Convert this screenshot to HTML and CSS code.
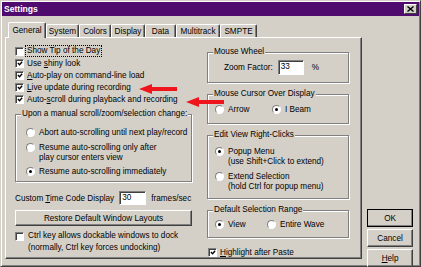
FILE: index.html
```html
<!DOCTYPE html>
<html lang="en">
<head>
  <meta charset="UTF-8">
  <title>Settings</title>
  <link rel="stylesheet" href="styles.css">
</head>
<body>

  <div class="window">
    <div class="titlebar">
      <span class="title">Settings</span>
      <span class="close-btn">
        <svg width="7" height="6" viewBox="0 0 7 6"><path d="M0.5 0.5 L6.5 5.5 M6.5 0.5 L0.5 5.5" stroke="#000" stroke-width="1.4"/></svg>
      </span>
    </div>

    <div class="main">
      <div class="sheet">
        <div class="tabs">
          <span class="tab tab-general active">General</span>
          <span class="tab tab-system">System</span>
          <span class="tab tab-colors">Colors</span>
          <span class="tab tab-display">Display</span>
          <span class="tab tab-data">Data</span>
          <span class="tab tab-multitrack">Multitrack</span>
          <span class="tab tab-smpte">SMPTE</span>
        </div>

        <div class="panel">
          <!-- left column -->
          <div class="col-left">
            <div class="check"><span class="box"></span><span class="focus">Show Tip of the Day</span></div>
            <div class="check"><span class="box"><svg viewBox="0 0 7 7"><path d="M1 3 L3 5 L6 1.5" /></svg></span><span>Use <u>s</u>hiny look</span></div>
            <div class="check"><span class="box"><svg viewBox="0 0 7 7"><path d="M1 3 L3 5 L6 1.5" /></svg></span><span><u>A</u>uto-play on command-line load</span></div>
            <div class="check"><span class="box"><svg viewBox="0 0 7 7"><path d="M1 3 L3 5 L6 1.5" /></svg></span><span><u>L</u>ive update during recording</span></div>
            <div class="check"><span class="box"><svg viewBox="0 0 7 7"><path d="M1 3 L3 5 L6 1.5" /></svg></span><span>Auto-<u>s</u>croll during playback and recording</span></div>

            <div class="group group-scroll">
              <span class="group-title">Upon a manual scroll/zoom/selection change:</span>
              <div class="radio"><span class="dot"></span><span>Abort auto-scrolling until next play/record</span></div>
              <div class="radio"><span class="dot"></span><span>Resume auto-scrolling only after<br>play cursor enters view</span></div>
              <div class="radio"><span class="dot on"></span><span>Resume auto-scrolling immediately</span></div>
            </div>

            <div class="timecode">
              <span>Custom <u>T</u>ime Code Display</span>
              <span class="field field-fps">30</span>
              <span>frames/sec</span>
            </div>

            <div class="btn btn-restore">Restore Default Window Layouts</div>

            <div class="check check-dock"><span class="box"></span><span>Ctrl key allows dockable windows to dock<br>(normally, Ctrl key forces undocking)</span></div>
          </div>

          <!-- right column -->
          <div class="col-right">
            <div class="group group-wheel">
              <span class="group-title">Mouse Wheel</span>
              <div class="zoom-row">
                <span>Zoom Factor:</span>
                <span class="field field-zoom">33</span>
                <span class="pct">%</span>
              </div>
            </div>

            <div class="group group-cursor">
              <span class="group-title">Mouse Cursor Over Display</span>
              <div class="radio-row">
                <div class="radio radio-arrow"><span class="dot"></span><span>Arrow</span></div>
                <div class="radio"><span class="dot on"></span><span>I Beam</span></div>
              </div>
            </div>

            <div class="group group-rclick">
              <span class="group-title">Edit View Right-Clicks</span>
              <div class="radio"><span class="dot on"></span><span>Popup Menu<br>(use Shift+Click to extend)</span></div>
              <div class="radio"><span class="dot"></span><span>Extend Selection<br>(hold Ctrl for popup menu)</span></div>
            </div>

            <div class="group group-range">
              <span class="group-title">Default Selection Range</span>
              <div class="radio-row">
                <div class="radio radio-view"><span class="dot on"></span><span>View</span></div>
                <div class="radio"><span class="dot"></span><span>Entire Wave</span></div>
              </div>
            </div>

            <div class="check check-paste"><span class="box"><svg viewBox="0 0 7 7"><path d="M1 3 L3 5 L6 1.5" /></svg></span><span><u>H</u>ighlight after Paste</span></div>
          </div>

          <svg class="arrow arrow-1" width="38" height="10" viewBox="0 0 38 10"><path d="M0 5 L13 0 L13 3 L38 3 L38 7 L13 7 L13 10 Z" fill="#f0141c"/></svg>
          <svg class="arrow arrow-2" width="38" height="10" viewBox="0 0 38 10"><path d="M0 5 L13 0 L13 3 L38 3 L38 7 L13 7 L13 10 Z" fill="#f0141c"/></svg>
        </div>
      </div>

      <div class="buttons">
        <div class="btn btn-side btn-default">OK</div>
        <div class="btn btn-side">Cancel</div>
        <div class="btn btn-side"><span><u>H</u>elp</span></div>
      </div>
    </div>
  </div>

</body>
</html>
```

FILE: styles.css
```css
body {
  margin: 0;
  font-family: "Liberation Sans", Arial, sans-serif;
  font-size: 8.2px;
  color: #000;
  background-color: #d4d0c8;
}

u {
  text-decoration-thickness: 1px;
  text-underline-offset: 1px;
}

.window {
  width: 421px;
  height: 267px;
  box-sizing: border-box;
  padding: 1px;
  border: 1px solid;
  border-color: #d4d0c8 #404040 #404040 #d4d0c8;
  box-shadow: inset 1px 1px #fff, inset -1px -1px #808080;
  background-color: #d4d0c8;
}

/* title bar */
.titlebar {
  height: 14px;
  display: flex;
  align-items: center;
  justify-content: space-between;
  padding: 0 2px 0 2px;
  background-color: #500b6e;
}

.title {
  color: #fff;
  font-weight: bold;
  font-size: 8.6px;
}

.close-btn {
  width: 13px;
  height: 10px;
  box-sizing: border-box;
  display: flex;
  align-items: center;
  justify-content: center;
  background-color: #d4d0c8;
  border: 1px solid;
  border-color: #fff #404040 #404040 #fff;
}

/* main area */
.main {
  display: flex;
  gap: 5px;
  height: 249px;
  padding: 6px 6px 0 3px;
}

.sheet {
  width: 358px;
  display: flex;
  flex-direction: column;
}

.tabs {
  height: 15px;
  display: flex;
  align-items: flex-end;
  padding-left: 3px;
}

.tab {
  height: 13px;
  box-sizing: border-box;
  display: flex;
  align-items: center;
  justify-content: center;
  border: 1px solid;
  border-bottom: none;
  border-color: #fff #404040 #fff #fff;
  border-radius: 2px 2px 0 0;
  box-shadow: inset -1px 0 #808080;
  background-color: #d4d0c8;
}

.tab.active {
  height: 16px;
  margin-bottom: -1px;
  position: relative;
  z-index: 1;
}

.tab-general { width: 38px; }
.tab-system { width: 33px; }
.tab-colors { width: 32px; }
.tab-display { width: 34px; }
.tab-data { width: 31px; }
.tab-multitrack { width: 44px; }
.tab-smpte { width: 37px; }

.panel {
  position: relative;
  height: 222px;
  box-sizing: border-box;
  display: flex;
  gap: 15px;
  padding: 7px 10px 0 9px;
  border: 1px solid;
  border-color: #fff #404040 #404040 #fff;
  box-shadow: inset -1px -1px #808080;
}

.col-left {
  width: 177px;
  display: flex;
  flex-direction: column;
}

.col-right {
  width: 142px;
  display: flex;
  flex-direction: column;
}

/* check boxes */
.check {
  height: 12px;
  display: flex;
  align-items: center;
  white-space: nowrap;
}

.box {
  width: 9px;
  height: 9px;
  box-sizing: border-box;
  flex-shrink: 0;
  margin-right: 3px;
  border: 1px solid;
  border-color: #808080 #fff #fff #808080;
  box-shadow: inset 1px 1px #404040;
  background-color: #fff;
  display: flex;
  align-items: center;
  justify-content: center;
}

.box svg {
  width: 7px;
  height: 7px;
  margin: 1px 0 0 1px;
}

.box path {
  fill: none;
  stroke: #000;
  stroke-width: 1.6;
}

.focus {
  outline: 1px dotted #000;
  outline-offset: 0;
  padding: 0 1px;
  margin-left: -1px;
  line-height: 10px;
}

.check-dock {
  height: auto;
  align-items: flex-start;
  line-height: 12px;
  margin-top: 4px;
}

.check-dock .box {
  margin-top: 2px;
  margin-right: 4px;
}

.check-paste {
  margin-top: 8px;
  padding-left: 1px;
}

/* group boxes */
.group {
  position: relative;
  box-sizing: border-box;
  border: 1px solid #808080;
  box-shadow: 1px 1px 0 #fff, inset 1px 1px 0 #fff;
}

.group-title {
  position: absolute;
  top: -6px;
  left: 5px;
  padding: 0 1px;
  line-height: 10px;
  background-color: #d4d0c8;
  white-space: nowrap;
}

.group-scroll {
  margin-top: 9px;
  height: 68px;
  padding: 13px 0 0 10px;
  display: flex;
  flex-direction: column;
  gap: 5px;
}

.group-scroll .radio + .radio + .radio {
  margin-top: -1px;
}

.group-wheel {
  margin-top: 7px;
  height: 31px;
  padding: 7px 0 0 16px;
}

.group-cursor {
  margin-top: 11px;
  height: 30px;
  padding: 10px 0 0 7px;
}

.group-rclick {
  margin-top: 11px;
  height: 64px;
  padding: 11px 0 0 7px;
  display: flex;
  flex-direction: column;
  gap: 5px;
}

.group-range {
  margin-top: 11px;
  height: 28px;
  padding: 9px 0 0 7px;
}

/* radio buttons */
.radio {
  display: flex;
  align-items: flex-start;
  line-height: 10px;
  white-space: nowrap;
}

.dot {
  width: 9px;
  height: 9px;
  box-sizing: border-box;
  flex-shrink: 0;
  margin: 0 4px 0 0;
  border-radius: 50%;
  border: 1px solid;
  border-color: #808080 #fff #fff #808080;
  background-color: #fff;
  display: flex;
  align-items: center;
  justify-content: center;
}

.dot.on::after {
  content: "";
  width: 3px;
  height: 3px;
  border-radius: 50%;
  background-color: #000;
}

.radio-row {
  display: flex;
}

.radio-arrow {
  width: 57px;
}

.radio-view {
  width: 52px;
}

/* text fields */
.field {
  box-sizing: border-box;
  height: 14px;
  line-height: 12px;
  padding-left: 2px;
  border: 1px solid;
  border-color: #808080 #fff #fff #808080;
  box-shadow: inset 1px 1px #404040;
  background-color: #fff;
}

.timecode {
  margin-top: 9px;
  height: 14px;
  display: flex;
  align-items: center;
  white-space: nowrap;
}

.field-fps {
  width: 27px;
  margin: 0 5px 0 5px;
}

.zoom-row {
  height: 15px;
  display: flex;
  align-items: center;
  white-space: nowrap;
}

.field-zoom {
  width: 26px;
  height: 15px;
  margin-left: 5px;
}

.pct {
  margin-left: 8px;
}

/* buttons */
.btn {
  box-sizing: border-box;
  display: flex;
  align-items: center;
  justify-content: center;
  background-color: #d4d0c8;
  border: 1px solid;
  border-color: #fff #404040 #404040 #fff;
  box-shadow: inset -1px -1px #808080;
  white-space: nowrap;
}

.btn-restore {
  margin-top: 5px;
  height: 16px;
}

.buttons {
  width: 46px;
  display: flex;
  flex-direction: column;
  justify-content: flex-end;
  gap: 2px;
  padding-bottom: 4px;
}

.btn-side {
  height: 18px;
}

.btn-default {
  outline: 1px solid #000;
  outline-offset: -1px;
  border-color: #fff #000 #000 #fff;
}

/* red annotation arrows */
.arrow {
  position: absolute;
}

.arrow-1 {
  left: 133px;
  top: 46px;
}

.arrow-2 {
  left: 180px;
  top: 59px;
}
```
